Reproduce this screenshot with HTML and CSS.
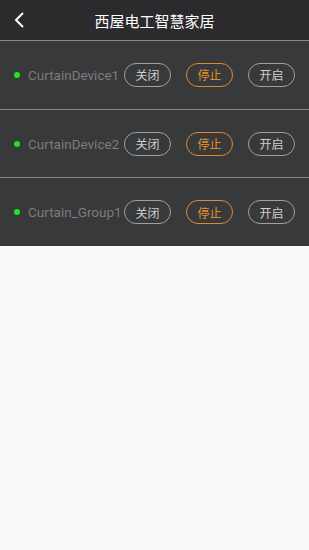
FILE: index.html
```html
<!DOCTYPE html>
<html lang="zh">
<head>
    <meta charset="UTF-8">
    <meta name="viewport" content="width=device-width, initial-scale=1.0">
    <title>西屋电工智慧家居</title>
    <link rel="stylesheet" href="styles.css">
</head>
<body>
    <div class="top-bar">
        <svg class="back" width="12" height="16" viewBox="0 0 12 16">
            <path d="M9 1 L2 8 L9 15" fill="none" stroke="#fff" stroke-width="2"/>
        </svg>
        <span class="title">西屋电工智慧家居</span>
    </div>
    <div class="device-list">
        <div class="device-row">
            <span class="dot"></span>
            <span class="name">CurtainDevice1</span>
            <div class="actions">
                <button class="btn">关闭</button>
                <button class="btn stop">停止</button>
                <button class="btn">开启</button>
            </div>
        </div>
        <div class="device-row">
            <span class="dot"></span>
            <span class="name">CurtainDevice2</span>
            <div class="actions">
                <button class="btn">关闭</button>
                <button class="btn stop">停止</button>
                <button class="btn">开启</button>
            </div>
        </div>
        <div class="device-row">
            <span class="dot"></span>
            <span class="name">Curtain_Group1</span>
            <div class="actions">
                <button class="btn">关闭</button>
                <button class="btn stop">停止</button>
                <button class="btn">开启</button>
            </div>
        </div>
    </div>
</body>
</html>
```

FILE: styles.css
```css
body {
    margin: 0;
    background-color: #fafafa;
    font-family: Roboto, "Noto Sans CJK SC", sans-serif;
}
.top-bar {
    height: 40px;
    background-color: #2b2b2d;
    display: flex;
    align-items: center;
    justify-content: center;
    position: relative;
}
.back {
    position: absolute;
    left: 14px;
    top: 12px;
}
.title {
    color: #fff;
    font-size: 15px;
}
.device-list {
    background-color: #38393b;
}
.device-row {
    height: 67.7px;
    border-top: 1px solid #8a8a8a;
    display: flex;
    align-items: center;
    padding-left: 14px;
    padding-right: 14px;
}
.dot {
    width: 6px;
    height: 6px;
    border-radius: 50%;
    background-color: #1ee61e;
    margin-right: 8px;
}
.name {
    color: #7c7c7c;
    font-size: 13.5px;
    flex: 1;
    white-space: nowrap;
}
.actions {
    display: flex;
    gap: 15px;
}
.btn {
    width: 47px;
    height: 24px;
    border: 1px solid #a0a0a0;
    border-radius: 12px;
    background: transparent;
    color: #cfcfcf;
    font-family: "Noto Sans CJK SC", sans-serif;
    font-size: 12px;
    padding: 0;
}
.btn.stop {
    border-color: #e08a30;
    color: #e8922e;
}
```
